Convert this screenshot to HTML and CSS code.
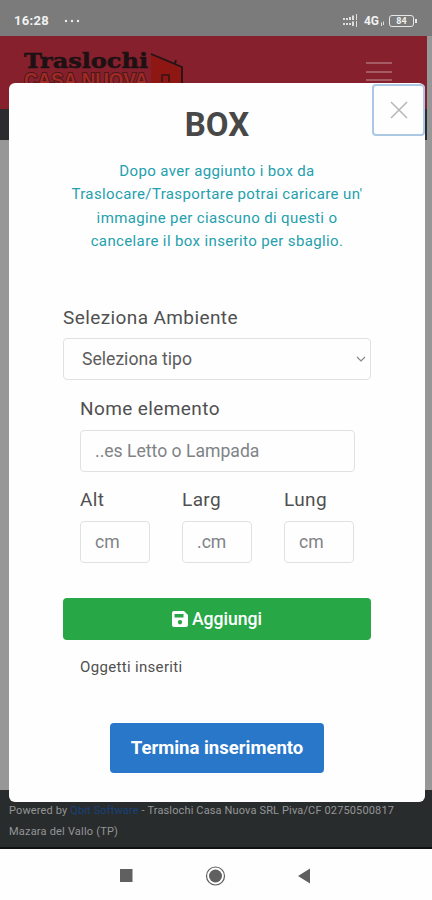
FILE: index.html
```html
<!DOCTYPE html>
<html lang="it">
<head>
<meta charset="utf-8">
<title>Traslochi Casa Nuova</title>
<link rel="stylesheet" href="styles.css">
</head>
<body>
<div class="screen">
  <div class="status">
    <span class="time">16:28</span>
    <svg class="dots" width="16" height="4" viewBox="0 0 16 4" fill="#eee"><circle cx="2" cy="2" r="1.2"/><circle cx="8" cy="2" r="1.2"/><circle cx="14" cy="2" r="1.2"/></svg>
    <svg class="signal" width="18" height="13" viewBox="0 0 18 13" fill="#ddd"><path d="M1 4h2v2H1zM4 4h2v2H4zM7 3h2v3H7zM10 1.500h2V6h-2zM14 0h1v6h-1zM1 9h2v2H1zM4 9h2v2H4zM7 9h2v2H7zM10 7.500h2V12h-2zM14 7h1v6h-1z"/></svg>
    <span class="net">4G</span>
    <svg class="arrows" width="5" height="5" viewBox="0 0 5 5" stroke="#ddd"><path d="M1.500 5V1.500M3.500 4V.5"/></svg>
    <span class="battery">84</span>
  </div>
  <div class="page">
    <header class="navbar">
      <svg class="logo" width="164" height="46" viewBox="0 0 164 46">
        <path d="M129 7l31 12v22h-31z" fill="#8f1713"/>
        <path d="M129 6l31 13v22M129 6l17 7 7 3 1-4" fill="none" stroke="#241416" stroke-width="1.800"/>
        <path d="M140 34v-7h7v7" fill="none" stroke="#351416" stroke-width="1.500"/>
        <text class="logo-top" x="2" y="20" textLength="124" lengthAdjust="spacingAndGlyphs">Traslochi</text>
        <text class="logo-bottom" x="2" y="39" textLength="124" lengthAdjust="spacingAndGlyphs">CASA NUOVA</text>
      </svg>
      <svg class="menu" width="28" height="22" viewBox="0 0 28 22" stroke="#a55b64" stroke-width="2"><path d="M1 2h26M1 11h26M1 19h26"/></svg>
    </header>
    <div class="strip"></div>
  </div>
  <footer class="footer">
    <div class="powered">Powered by <a>Qbit Software</a> - Traslochi Casa Nuova SRL Piva/CF 02750500817</div>
    <div class="city">Mazara del Vallo (TP)</div>
  </footer>
  <nav class="system">
    <svg width="432" height="51" viewBox="0 0 432 51"><path d="M120 20h12.500v13H120zM298 27l12-7.500v15z" fill="#606060"/><circle cx="215.500" cy="27" r="6.500" fill="#606060"/><circle cx="215.500" cy="27" r="9" fill="none" stroke="#606060" stroke-width="1.200"/></svg>
  </nav>
  <main class="modal">
    <button class="close" aria-label="Chiudi"><svg width="18" height="18" viewBox="0 0 18 18" stroke="#b8b8b8" stroke-width="1.600"><path d="M1 1l16 16M17 1L1 17"/></svg></button>
    <h1>BOX</h1>
    <p class="intro">Dopo aver aggiunto i box da<br>Traslocare/Trasportare potrai caricare un'<br>immagine per ciascuno di questi o<br>cancelare il box inserito per sbaglio.</p>
    <label class="label">Seleziona Ambiente</label>
    <div class="field select"><span>Seleziona tipo</span><svg width="10" height="6" viewBox="0 0 10 6" fill="none" stroke="#888" stroke-width="1.200"><path d="M1 1l4 4 4-4"/></svg></div>
    <div class="details">
      <label class="label">Nome elemento</label>
      <div class="field name">..es Letto o Lampada</div>
      <div class="sizes">
        <div><label class="label">Alt</label><div class="field">cm</div></div>
        <div><label class="label">Larg</label><div class="field">.cm</div></div>
        <div><label class="label">Lung</label><div class="field">cm</div></div>
      </div>
    </div>
    <button class="add"><svg width="16" height="16" viewBox="0 0 16 16"><path fill="#fff" fill-rule="evenodd" d="M2 0h10l4 4v10q0 2-2 2H2q-2 0-2-2V2q0-2 2-2zM2.500 3v3.500h9V3zM8 9a2.200 2.200 0 1 0 .01 0z"/></svg><span>Aggiungi</span></button>
    <div class="inserted">Oggetti inseriti</div>
    <button class="finish">Termina inserimento</button>
  </main>
</div>
</body>
</html>
```
FILE: styles.css
```css
* { box-sizing: border-box; }
body { margin: 0; font-family: Roboto, sans-serif; color: #505050; }
button { border: 0; padding: 0; font-family: inherit; color: #fff; }
.screen { position: relative; width: 432px; height: 900px; overflow: hidden; display: flex; flex-direction: column; background: #808080; }
.status { height: 36px; padding: 5px 17px 0 14px; display: flex; align-items: center; background: #7b7b7b; color: #f1f1f1; flex: none; }
.time { font-size: 13px; font-weight: 700; letter-spacing: .3px; width: 50px; }
.signal { margin-left: auto; margin-right: 4px; }
.net { font-size: 12px; font-weight: 700; }
.arrows { margin: 5px 4px 0 1px; }
.battery { position: relative; width: 25px; height: 12px; border: 1.500px solid #e6e6e6; border-radius: 3px; font-size: 9px; line-height: 10px; font-weight: 700; text-align: center; margin-right: 1px; }
.battery::after { content: ""; position: absolute; right: -4px; top: 3px; width: 2px; height: 4px; background: #e6e6e6; }
.page { flex: 1; background: #979797; }
.navbar { width: 427px; height: 73px; padding: 12px 34px 0 22px; display: flex; justify-content: space-between; background: #86202c; }
.menu { margin-top: 13px; }
.logo-top { font: 700 21px "DejaVu Serif", serif; fill: #1d1114; stroke: #1d1114; stroke-width: .5px; }
.logo-bottom { font: 700 20px "Liberation Sans", sans-serif; fill: #a12a25; stroke: #4a171a; stroke-width: 2px; paint-order: stroke; }
.strip { width: 427px; height: 31px; background: #2c2c2e; }
.footer { height: 59px; flex: none; padding: 10px 9px 0; background: #292c2d; border-bottom: 2px solid #101212; color: #939596; font-size: 11px; line-height: 21px; white-space: nowrap; }
.powered { letter-spacing: .14px; }
.city { letter-spacing: .2px; }
.footer a { color: #15427a; }
.system { height: 51px; flex: none; background: #fefefe; }
.system svg { display: block; }
.modal { position: absolute; left: 9px; top: 83px; width: 416px; height: 719px; padding: 0 54px; border-radius: 6px; background: #fefefe; display: flex; flex-direction: column; align-items: stretch; }
.close { position: absolute; right: 0; top: 1px; width: 53px; height: 52px; border: 2px solid #adc8e5; border-radius: 4px; background: #fefefe; display: flex; align-items: center; justify-content: center; }
h1 { margin: 23px 0 0; height: 38px; font-size: 33px; line-height: 38px; font-weight: 700; text-align: center; color: #484848; }
.intro { margin: 16px 0 0; height: 93px; color: #24a0ad; font-size: 15px; letter-spacing: .37px; line-height: 23.300px; text-align: center; white-space: nowrap; }
.label { display: block; height: 24px; font-size: 19px; line-height: 24px; letter-spacing: .4px; white-space: nowrap; }
.modal > .label { margin-top: 53px; }
.field { height: 42px; border: 1px solid #dfe1e3; border-radius: 4px; padding: 0 14px; display: flex; align-items: center; font-size: 17.600px; color: #808386; white-space: nowrap; }
.select { margin-top: 8px; padding: 0 4px 0 18px; justify-content: space-between; color: #5c5c5c; }
.details { margin: 17px 16px 0 17px; }
.details .field { margin-top: 9px; }
.sizes { display: flex; gap: 32px; margin-top: 16px; }
.sizes > div { width: 70px; }
.add { height: 42px; flex: none; margin-top: 35px; border-radius: 4px; background: #27a745; display: flex; align-items: center; justify-content: center; gap: 4px; font-size: 17.600px; font-weight: 500; }
.inserted { margin: 17px 17px 0; height: 20px; font-size: 15px; letter-spacing: .33px; line-height: 20px; }
.finish { align-self: center; margin-top: 46px; width: 214px; height: 50px; border-radius: 4px; background: #2877c9; font-size: 18.500px; font-weight: 700; }
```
